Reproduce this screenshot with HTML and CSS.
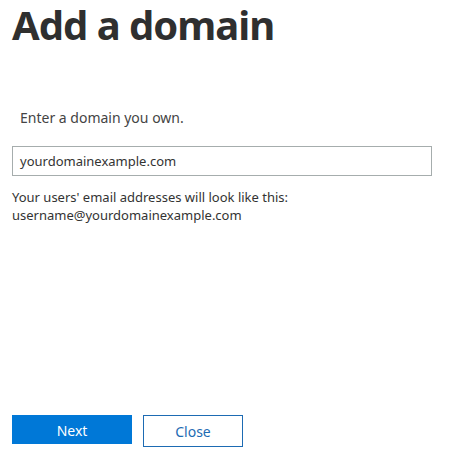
FILE: index.html
```html
<!DOCTYPE html>
<html>
<head>
<meta charset="utf-8">
<link rel="stylesheet" href="styles.css">
</head>
<body>
<div class="page">
  <h1 class="title">Add a domain</h1>
  <p class="prompt">Enter a domain you own.</p>
  <div class="input">yourdomainexample.com</div>
  <p class="help">Your users' email addresses will look like this:<br>username@yourdomainexample.com</p>
  <div class="spacer"></div>
  <div class="actions">
    <button class="btn btn-primary">Next</button>
    <button class="btn btn-secondary">Close</button>
  </div>
</div>
</body>
</html>
```
FILE: styles.css
```css
html, body {
  margin: 0;
  padding: 0;
  background: #fff;
}
.page {
  box-sizing: border-box;
  height: 468px;
  padding: 0 12px 21px 12px;
  display: flex;
  flex-direction: column;
  font-family: "Noto Sans", "Open Sans", sans-serif;
  color: #333;
}
.title {
  margin: 0;
  font-size: 40px;
  line-height: 50px;
  font-weight: 700;
  letter-spacing: -1px;
  color: #2f2f2f;
}
.prompt {
  margin: 58px 0 0 8px;
  font-size: 14px;
  line-height: 20px;
  color: #444;
}
.input {
  margin-top: 18px;
  width: 420px;
  height: 30px;
  box-sizing: border-box;
  border: 1px solid #a6adad;
  padding: 0 7px;
  font-size: 13px;
  line-height: 28px;
  color: #333;
}
.help {
  margin: 12px 0 0 0;
  font-size: 13px;
  line-height: 18px;
  color: #333;
}
.spacer {
  flex: 1;
}
.actions {
  display: flex;
  align-items: flex-start;
  gap: 11px;
}
.btn {
  font-family: inherit;
  font-size: 14px;
  box-sizing: border-box;
  padding: 0;
  cursor: pointer;
}
.btn-primary {
  width: 120px;
  height: 29px;
  background: #0078d7;
  border: 1px solid #0078d7;
  color: #fff;
  padding-top: 2px;
}
.btn-secondary {
  width: 100px;
  height: 32px;
  background: #fff;
  border: 1px solid #1d6bb3;
  color: #1d6bb3;
}
```
